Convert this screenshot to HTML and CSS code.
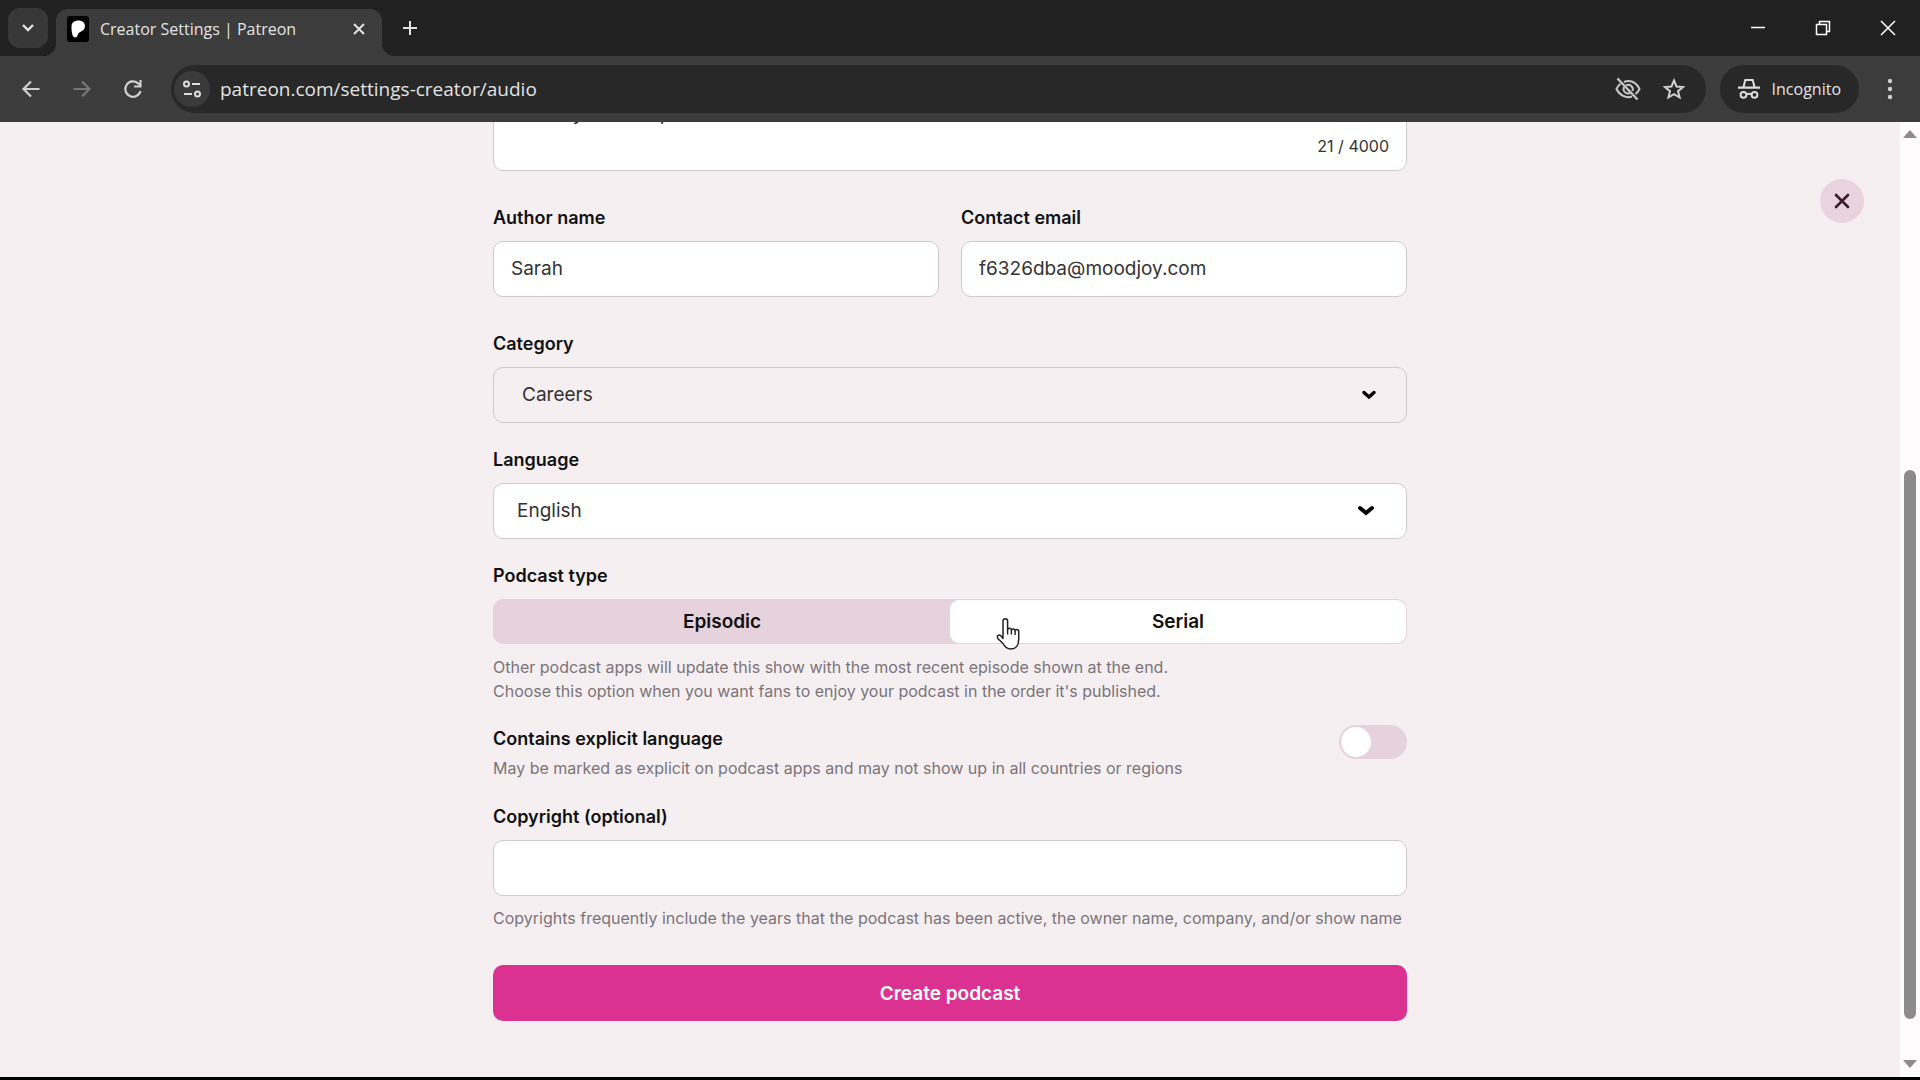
FILE: index.html
```html
<!DOCTYPE html>
<html lang="en">
<head>
    <meta charset="UTF-8">
    <meta name="viewport" content="width=device-width, initial-scale=1.0">
    <title>Creator Settings | Patreon</title>
    <link rel="stylesheet" href="styles.css">
</head>
<body>
    <div class="tab-strip">
        <button class="tab-search" type="button" aria-label="Search tabs">
            <svg width="14" height="10" viewBox="0 0 14 10"><path d="M2 2l5 5 5-5" fill="none" stroke="#e3e3e3" stroke-width="2.4"/></svg>
        </button>
        <div class="tab">
            <svg class="favicon" width="22" height="26" viewBox="0 0 22 26">
                <rect width="22" height="26" rx="3" fill="#000"/>
                <path d="M4.500 10.500C4.500 6.500 7.500 4.500 11.500 4.500c4 0 6.500 2.300 6.500 5.600 0 3.200-2 4.800-4.300 5.600-2.200.8-2.600 2.200-3.200 3.800-.6 1.500-1.400 2-2.600 1.900-2.600-.2-3.400-5-3.400-10.900z" fill="#fff"/>
            </svg>
            <span class="tab-title">Creator Settings | Patreon</span>
            <button class="icon-btn" type="button" aria-label="Close tab">
                <svg width="14" height="14" viewBox="0 0 14 14"><path d="M2 2l10 10M12 2L2 12" stroke="#e3e3e3" stroke-width="2"/></svg>
            </button>
        </div>
        <button class="icon-btn new-tab" type="button" aria-label="New tab">
            <svg width="16" height="16" viewBox="0 0 16 16"><path d="M8 1v14M1 8h14" stroke="#e3e3e3" stroke-width="2"/></svg>
        </button>
        <div class="window-buttons">
            <button class="icon-btn" type="button" aria-label="Minimize">
                <svg width="16" height="16" viewBox="0 0 16 16"><path d="M1 7.500h14" stroke="#fff" stroke-width="1.500"/></svg>
            </button>
            <button class="icon-btn" type="button" aria-label="Restore">
                <svg width="16" height="16" viewBox="0 0 16 16"><path d="M1.500 4.500h10v10h-10zM4.500 4.500v-3h10v10h-3" fill="none" stroke="#fff" stroke-width="1.500"/></svg>
            </button>
            <button class="icon-btn" type="button" aria-label="Close window">
                <svg width="16" height="16" viewBox="0 0 16 16"><path d="M1 1l14 14M15 1L1 15" stroke="#fff" stroke-width="1.500"/></svg>
            </button>
        </div>
    </div>

    <div class="toolbar">
        <div class="nav-buttons">
            <button class="icon-btn" type="button" aria-label="Back">
                <svg width="20" height="20" viewBox="0 0 20 20"><path d="M18.500 10H3M10 2.500L2.500 10l7.500 7.500" fill="none" stroke="#d0d0d0" stroke-width="2.200"/></svg>
            </button>
            <button class="icon-btn" type="button" aria-label="Forward" disabled>
                <svg width="20" height="20" viewBox="0 0 20 20"><path d="M1.500 10H17M10 2.500l7.500 7.500-7.500 7.500" fill="none" stroke="#767676" stroke-width="2.200"/></svg>
            </button>
            <button class="icon-btn" type="button" aria-label="Reload">
                <svg width="20" height="20" viewBox="0 0 20 20"><path d="M17.500 12A7.700 7.700 0 1 1 15.500 4.600L17.500 7" fill="none" stroke="#d0d0d0" stroke-width="2.200"/><path d="M18.600 1v7.500h-7.500V6.400h5.400V1z" fill="#d0d0d0"/></svg>
            </button>
        </div>
        <div class="address-bar">
            <button class="site-info" type="button" aria-label="Site information">
                <svg width="20" height="20" viewBox="0 0 20 20" fill="none" stroke="#dcdcdc" stroke-width="2"><circle cx="4.500" cy="5" r="2.500"/><path d="M10 5h8M2 15h8"/><circle cx="15.500" cy="15" r="2.500"/></svg>
            </button>
            <input class="url" type="text" aria-label="Address" value="patreon.com/settings-creator/audio">
            <button class="icon-btn" type="button" aria-label="Third-party cookies blocked">
                <svg width="26" height="24" viewBox="0 0 26 24" fill="none" stroke="#c7c7c7" stroke-width="2"><path d="M9 5C14 2.500 21 4.500 24.500 12c-1 2-2.300 3.700-4 5M17 19.500C11 21.500 4.500 18.500 1.500 12c1-2.200 2.300-4 4-5.200"/><path d="M11 8.500a4.500 4.500 0 0 1 6.500 5.500M15 16a4.500 4.500 0 0 1-6-6"/><path d="M2.500 1.500l20 21" stroke-width="2.400"/></svg>
            </button>
            <button class="icon-btn" type="button" aria-label="Bookmark this tab">
                <svg width="22" height="22" viewBox="0 0 22 22"><path d="M11 2.500l2.500 6 6.500.5-5 4.200 1.600 6.300L11 16.100l-5.600 3.400L7 13.200 2 9l6.500-.5z" fill="none" stroke="#d0d0d0" stroke-width="2"/></svg>
            </button>
        </div>
        <button class="incognito" type="button">
            <svg width="22" height="20" viewBox="0 0 22 20"><path d="M6.500 0h9l2 7.500H22v2.200H0V7.500h4.500zM8 2L6.800 7.500h8.400L14 2z" fill="#dcdcdc" fill-rule="evenodd"/><path d="M8.500 15.500q2.500-1.500 5 0" fill="none" stroke="#dcdcdc" stroke-width="1.800"/><circle cx="5.500" cy="15.800" r="2.900" fill="none" stroke="#dcdcdc" stroke-width="2"/><circle cx="16.500" cy="15.800" r="2.900" fill="none" stroke="#dcdcdc" stroke-width="2"/></svg>
            <span>Incognito</span>
        </button>
        <button class="icon-btn menu-btn" type="button" aria-label="Menu">
            <svg width="6" height="22" viewBox="0 0 6 22" fill="#d0d0d0"><circle cx="3" cy="3" r="2.200"/><circle cx="3" cy="11" r="2.200"/><circle cx="3" cy="19" r="2.200"/></svg>
        </button>
    </div>

    <div class="viewport">
        <main class="page">
            <form class="podcast-form">
                <div class="description">
                    <textarea class="description-text" aria-label="Description" rows="1">Monday women podcasts</textarea>
                    <span class="counter">21 / 4000</span>
                </div>

                <div class="field-row">
                    <div class="field">
                        <label for="author">Author name</label>
                        <input class="control" type="text" id="author" value="Sarah">
                    </div>
                    <div class="field">
                        <label for="email">Contact email</label>
                        <input class="control" type="email" id="email" value="f6326dba@moodjoy.com">
                    </div>
                </div>

                <div class="field">
                    <label for="category">Category</label>
                    <div class="select-wrap">
                        <select class="control select-category" id="category">
                            <option>Careers</option>
                        </select>
                        <svg class="chevron chevron-category" width="16" height="12" viewBox="0 0 16 12"><path d="M3 3.500l5 4.500 5-4.500" fill="none" stroke="#000" stroke-width="3.400" stroke-linecap="round"/></svg>
                    </div>
                </div>

                <div class="field">
                    <label for="language">Language</label>
                    <div class="select-wrap">
                        <select class="control select-language" id="language">
                            <option>English</option>
                        </select>
                        <svg class="chevron chevron-language" width="18" height="14" viewBox="0 0 18 14"><path d="M3 4l6 5 6-5" fill="none" stroke="#000" stroke-width="4" stroke-linecap="round"/></svg>
                    </div>
                </div>

                <div class="field" role="radiogroup" aria-labelledby="type-title">
                    <span class="field-title" id="type-title">Podcast type</span>
                    <div class="segments">
                        <label class="segment"><input type="radio" name="type">Episodic</label>
                        <label class="segment"><input type="radio" name="type" checked>Serial</label>
                        <svg class="pointer" width="24" height="34" viewBox="0 0 24 34"><path d="M7 19V4a2.300 2.300 0 0 1 4.600 0V12.500a2 2 0 0 1 3.800.5 2 2 0 0 1 3.700.8 1.900 1.900 0 0 1 3.600 1.200V22.500c0 6-3.200 9.500-7.700 9.500-4.200 0-6.200-2-8-5.500L1.800 21.500C.4 18.500 3 17 5 19l2 2.500z" fill="#fff" stroke="#222" stroke-width="1.500" stroke-linejoin="round"/><path d="M11.600 12v5.500M15.400 13v4.500M19.100 14v4" fill="none" stroke="#222" stroke-width="1.400"/></svg>
                    </div>
                    <p class="hint">Other podcast apps will update this show with the most recent episode shown at the end.<br>Choose this option when you want fans to enjoy your podcast in the order it's published.</p>
                </div>

                <div class="toggle-row">
                    <div>
                        <label for="explicit">Contains explicit language</label>
                        <p class="hint">May be marked as explicit on podcast apps and may not show up in all countries or regions</p>
                    </div>
                    <input class="toggle" type="checkbox" id="explicit">
                </div>

                <div class="field">
                    <label for="copyright">Copyright (optional)</label>
                    <input class="control" type="text" id="copyright">
                    <p class="hint">Copyrights frequently include the years that the podcast has been active, the owner name, company, and/or show name</p>
                </div>

                <button class="submit" type="submit">Create podcast</button>
            </form>
            <button class="close" type="button" aria-label="Close">
                <svg width="16" height="16" viewBox="0 0 16 16"><path d="M2 2l12 12M14 2L2 14" stroke="#3d1a2e" stroke-width="2.600" stroke-linecap="round"/></svg>
            </button>
        </main>
        <div class="scrollbar">
            <svg width="14" height="8" viewBox="0 0 14 8"><path d="M7 0l7 8H0z" fill="#8b8b8b"/></svg>
            <div class="track">
                <div class="thumb"></div>
            </div>
            <svg width="14" height="8" viewBox="0 0 14 8"><path d="M0 0h14L7 8z" fill="#8b8b8b"/></svg>
        </div>
    </div>
</body>
</html>
```
FILE: styles.css
```css
* {
    margin: 0;
    padding: 0;
    box-sizing: border-box;
}

body {
    display: flex;
    flex-direction: column;
    height: 100vh;
    padding-bottom: 3px;
    overflow: hidden;
    background-color: #000;
    font-family: Inter, "Liberation Sans", sans-serif;
    font-size: 19px;
    color: #111;
}

button,
input,
select,
textarea {
    font: inherit;
    color: inherit;
    border: none;
    outline: none;
    background: none;
}

svg {
    display: block;
    flex-shrink: 0;
}

/* Browser tabs */
.tab-strip {
    display: flex;
    align-items: flex-end;
    height: 56px;
    padding-left: 8px;
    background-color: #212121;
    font-family: "Open Sans", "Noto Sans", sans-serif;
    font-size: 16px;
    color: #e3e3e3;
}

.tab-search {
    display: grid;
    place-items: center;
    width: 40px;
    height: 40px;
    margin: 0 8px 8px 0;
    border-radius: 12px;
    background-color: #383838;
}

.tab {
    position: relative;
    display: flex;
    align-items: center;
    gap: 11px;
    width: 326px;
    height: 47px;
    padding: 0 16px 8px 11px;
    border-radius: 12px 12px 0 0;
    background-color: #3c3c3c;
}

/* Curved feet of the active tab */
.tab::before,
.tab::after {
    content: "";
    position: absolute;
    bottom: 0;
    width: 12px;
    height: 12px;
}

.tab::before {
    right: 100%;
    background: radial-gradient(circle at 0 0, #212121 12px, #3c3c3c 12px);
}

.tab::after {
    left: 100%;
    background: radial-gradient(circle at 100% 0, #212121 12px, #3c3c3c 12px);
}

.tab-title {
    flex: 1;
    white-space: nowrap;
}

.icon-btn {
    display: grid;
    place-items: center;
}

.new-tab {
    height: 56px;
    margin-left: 20px;
}

.window-buttons {
    display: flex;
    gap: 49px;
    height: 56px;
    margin-left: auto;
    padding-right: 24px;
}

/* Address row */
.toolbar {
    display: flex;
    align-items: center;
    height: 66px;
    padding: 0 27px 0 21px;
    background-color: #3c3c3c;
    font-family: "Open Sans", "Noto Sans", sans-serif;
    color: #e3e3e3;
}

.nav-buttons {
    display: flex;
    gap: 31px;
    margin-right: 28px;
}

.address-bar {
    display: flex;
    flex: 1;
    align-items: center;
    gap: 22px;
    height: 48px;
    padding: 0 21px 0 3px;
    border-radius: 24px;
    background-color: #282828;
}

.site-info {
    display: grid;
    place-items: center;
    width: 36px;
    height: 36px;
    margin-right: -12px;
    border-radius: 50%;
    background-color: #3a3a3a;
}

.url {
    flex: 1;
    font-size: 19px;
}

.incognito {
    display: flex;
    align-items: center;
    gap: 12px;
    height: 48px;
    margin-left: 14px;
    padding: 0 18px;
    border-radius: 24px;
    background-color: #282828;
    font-size: 16px;
}

.menu-btn {
    margin-left: 28px;
}

/* Page and its scrollbar */
.viewport {
    display: flex;
    flex: 1;
    min-height: 0;
}

/* Scrolled to the end, so the form hangs from the bottom edge */
.page {
    position: relative;
    display: flex;
    flex: 1;
    flex-direction: column;
    align-items: center;
    justify-content: flex-end;
    padding-bottom: 56px;
    overflow: hidden;
    background-color: #f5eff2;
}

.scrollbar {
    display: flex;
    flex-direction: column;
    align-items: center;
    gap: 4px;
    width: 20px;
    padding: 8px 0 9px;
    background-color: #fdfbfc;
}

.track {
    display: flex;
    flex: 1;
    flex-direction: column;
    justify-content: flex-end;
    padding-bottom: 37px;
}

.thumb {
    width: 12px;
    height: 549px;
    max-height: 63%;
    border-radius: 6px;
    background-color: #8b8b8b;
}

.close {
    position: absolute;
    top: 57px;
    right: 36px;
    display: grid;
    place-items: center;
    width: 44px;
    height: 44px;
    border-radius: 50%;
    background-color: #e8d3de;
}

/* Form */
.podcast-form {
    width: 100%;
    max-width: 914px;
}

.description {
    display: flex;
    flex-direction: column;
    gap: 6px;
    margin-bottom: 34px;
    padding: 12px 17px;
    border: 1px solid #cfc9cc;
    border-radius: 10px;
    background-color: #fff;
}

.description-text {
    line-height: 28px;
    resize: none;
    overflow: hidden;
}

.counter {
    align-self: flex-end;
    font-size: 16px;
    line-height: 24px;
    color: #333;
}

.field-row {
    display: grid;
    grid-template-columns: 1fr 1fr;
    gap: 22px;
    margin-bottom: 10px;
}

.field {
    margin-bottom: 24px;
}

.field > label,
.field-title,
.toggle-row label {
    display: block;
    font-size: 18px;
    font-weight: 600;
    line-height: 24px;
}

.field > label,
.field-title {
    padding-top: 1px;
    margin-bottom: 11px;
}

.control {
    display: block;
    width: 100%;
    height: 56px;
    padding: 0 17px 2px;
    border: 1px solid #cfc9cc;
    border-radius: 10px;
    background-color: #fff;
    color: #333;
}

.select-wrap {
    position: relative;
}

select.control {
    appearance: none;
}

.select-category {
    padding-left: 28px;
    background-color: #f5eff2;
}

.select-language {
    padding-left: 23px;
}

.chevron {
    position: absolute;
    top: 50%;
    transform: translateY(-50%);
    pointer-events: none;
}

.chevron-category {
    right: 30px;
}

.chevron-language {
    right: 32px;
}

.segments {
    position: relative;
    display: grid;
    grid-template-columns: 1fr 1fr;
    height: 45px;
    margin-bottom: 11px;
    padding: 1px;
    border-radius: 10px;
    background-color: #e5d2dc;
}

.segment {
    display: grid;
    place-items: center;
    border-radius: 9px;
    font-weight: 600;
}

.segment:has(:checked) {
    background-color: #fff;
}

.segment input {
    position: absolute;
    appearance: none;
}

/* Mouse pointer over the Serial option */
.pointer {
    position: absolute;
    top: 18px;
    left: 55%;
}

.hint {
    font-size: 16px;
    line-height: 24px;
    color: #7b7479;
}

.control + .hint {
    margin-top: 10px;
}

.toggle-row {
    display: flex;
    justify-content: space-between;
    margin-bottom: 24px;
}

.toggle-row .hint {
    margin-top: 5px;
}

.toggle {
    appearance: none;
    width: 68px;
    height: 34px;
    margin-top: -2px;
    padding: 2px;
    border-radius: 17px;
    background-color: #e5d2dc;
}

.toggle::before {
    content: "";
    display: block;
    width: 30px;
    height: 30px;
    border-radius: 50%;
    background-color: #fff;
}

.toggle:checked::before {
    margin-left: auto;
}

.submit {
    width: 100%;
    height: 56px;
    margin-top: 11px;
    border-radius: 10px;
    background-color: #db3191;
    color: #fff;
    font-weight: 600;
    cursor: pointer;
}
```
